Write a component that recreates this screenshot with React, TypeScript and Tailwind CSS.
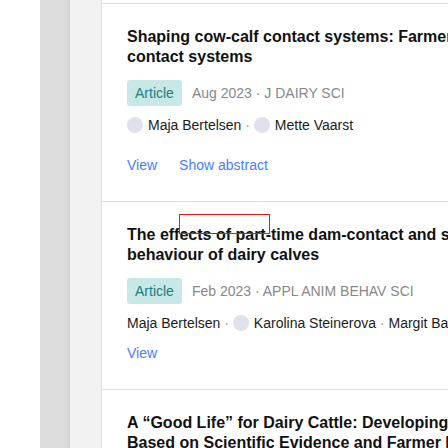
type Author = { name: string; avatar: boolean };

type Pub = {
  title: string[];
  date: string;
  journal: string;
  authors: Author[];
  abstract?: boolean;
  mark?: boolean;
};

const pubs: Pub[] = [
  {
    title: [
      "Shaping cow-calf contact systems: Farmers’ perceptions of cow-calf",
      "contact systems",
    ],
    date: "Aug 2023",
    journal: "J DAIRY SCI",
    authors: [
      { name: "Maja Bertelsen", avatar: true },
      { name: "Mette Vaarst", avatar: true },
    ],
    abstract: true,
  },
  {
    title: [
      "The effects of part-time dam-contact and separation on the",
      "behaviour of dairy calves",
    ],
    date: "Feb 2023",
    journal: "APPL ANIM BEHAV SCI",
    authors: [
      { name: "Maja Bertelsen", avatar: false },
      { name: "Karolina Steinerova", avatar: true },
      { name: "Margit Bak Jensen", avatar: false },
    ],
    mark: true,
  },
  {
    title: [
      "A “Good Life” for Dairy Cattle: Developing and Testing a Framework",
      "Based on Scientific Evidence and Farmer Perspectives",
    ],
    date: "Jan 2023",
    journal: "ANIMALS",
    authors: [{ name: "Maja Bertelsen", avatar: true }],
  },
];

function Item({ pub }: { pub: Pub }) {
  return (
    <div className="relative border-t border-[#dedede] pl-[25px] pt-[23px] pb-[26px]">
      {pub.mark && (
        <div className="absolute left-[77px] top-[12px] h-[20px] w-[91px] border border-[#e8161b]" />
      )}
      <div className="text-[16px] font-bold leading-[20px] text-[#111]">
        {pub.title.map((line) => (
          <div key={line} className="whitespace-nowrap">
            {line}
          </div>
        ))}
      </div>
      <div className="mt-[13px] flex items-center whitespace-nowrap text-[14px] leading-[20px]">
        <span className="rounded-[3px] bg-[#c7e8e6] px-[8px] py-[3px] text-[#1f7c80]">
          Article
        </span>
        <span className="ml-[10px] text-[#888]">
          {pub.date} · {pub.journal}
        </span>
      </div>
      <div className="mt-[9px] flex h-[20px] items-center whitespace-nowrap text-[14px] leading-[20px] text-[#1c1c1c]">
        {pub.authors.map((a, i) => (
          <span key={a.name} className="flex items-center">
            {i > 0 && <span className="whitespace-pre text-[#999]"> · </span>}
            {a.avatar && (
              <span className="mr-[5px] h-[16px] w-[16px] rounded-full bg-[#e1e1ec]" />
            )}
            <span>{a.name}</span>
          </span>
        ))}
      </div>
      <div
        className={
          "flex gap-[22px] text-[14px] leading-[20px] text-[#4a7dff] " +
          (pub.abstract ? "mt-[20px]" : "mt-[10px]")
        }
      >
        <span>View</span>
        {pub.abstract && <span>Show abstract</span>}
      </div>
    </div>
  );
}

export default function App() {
  return (
    <div className="flex h-[448px] w-[448px] overflow-hidden bg-white font-['Liberation_Sans',Arial,sans-serif]">
      <div className="w-[40px] shrink-0 bg-white" />
      <div className="w-[30px] shrink-0 bg-[linear-gradient(to_right,#dcdcdc_80%,#d2d2d2)]" />
      <div className="w-[31px] shrink-0 bg-[#f2f2f2]" />
      <div className="min-w-0 flex-1 border-l border-[#e0e0e0] pt-[3px]">
        {pubs.map((p) => (
          <Item key={p.title[0]} pub={p} />
        ))}
      </div>
    </div>
  );
}
